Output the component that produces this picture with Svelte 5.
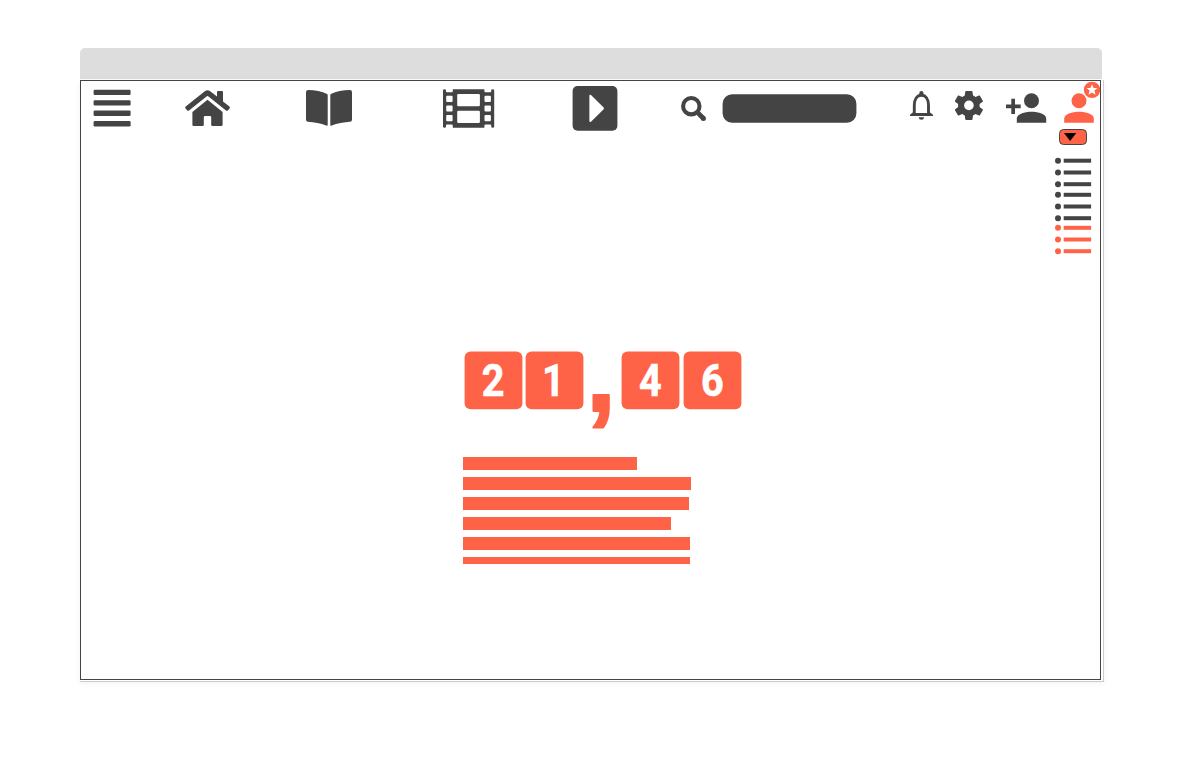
<script>
  const lists = [
    { tone: 'dark', rows: [160.7, 172.5, 184.2] },
    { tone: 'dark', rows: [194.8, 206.5, 218.2] },
    { tone: 'coral', rows: [227.8, 239.5, 251.2] }
  ];
  const digits = [
    { value: '2', left: 464.6, centre: 493.2 },
    { value: '1', left: 525.6, centre: 553.4 },
    { value: '4', left: 621.6, centre: 650.4 },
    { value: '6', left: 683.6, centre: 712.3 }
  ];
  const lines = [174, 228, 226, 208, 227, 227];
</script>

<main>
  <div class="titlebar"></div>
  <div class="window">
    <div class="screen">
      <nav>
        <svg class="menu" width="38" height="52" viewBox="93 81 38 52">
          {#each [89.7, 100.2, 110.6, 121.1] as y}
            <rect x="93.6" {y} width="37" height="5.3" rx="1.2" />
          {/each}
        </svg>
        <svg class="home" width="46" height="52" viewBox="185 81 46 52">
          <path d="M185.6 108.4Q184.7 107.3 185.7 106.4L204.8 91.2Q207.5 89.5 210.2 91.2L217 96.6V92Q217 91 218 91H222Q223 91 223 92V101.4L229.4 106.5Q230.3 107.3 229.5 108.4L227.8 110.4Q227 111.2 226 110.5L208.5 96.4Q207.5 95.7 206.5 96.4L189 110.5Q188 111.2 187.2 110.4Z" />
          <path d="M207.5 99.8L222.6 112V124.8Q222.6 126 221.4 126H212.4Q211.2 126 211.2 124.8V117.2Q211.2 116 210 116H205Q203.8 116 203.8 117.2V124.8Q203.8 126 202.6 126H193.6Q192.4 126 192.4 124.8V112Z" />
        </svg>
        <svg class="book" width="46" height="52" viewBox="306 81 46 52">
          <path d="M308.2 90.1C315 90.4 322 91.4 327.1 94.1Q327.7 94.5 327.7 95.2V124.8Q327.7 126.2 326.2 125.6C321 123.2 314 122.2 308 121.8Q306 121.6 306 119.7V92.2Q306 90 308.2 90.1Z" />
          <path d="M349.8 90.1C343 90.4 336 91.4 330.9 94.1Q330.3 94.5 330.3 95.2V124.8Q330.3 126.2 331.8 125.6C337 123.2 344 122.2 350 121.8Q352 121.6 352 119.7V92.2Q352 90 349.8 90.1Z" />
        </svg>
        <svg class="film" width="52" height="52" viewBox="443 81 52 52">
          <path d="M443 90.3Q443 89.2 444.6 89.2Q446 89.2 446 90.5V91.2Q446 92.3 447 92.3H451.7Q452.8 92.3 452.8 91.2V89.2H484.4V91.2Q484.4 92.3 485.5 92.3H490.2Q491.2 92.3 491.2 91.2V90.5Q491.2 89.2 492.6 89.2Q494.2 89.2 494.2 90.3V126.7Q494.2 127.8 492.6 127.8Q491.2 127.8 491.2 126.5V125.7Q491.2 124.6 490.2 124.6H485.5Q484.4 124.6 484.4 125.7V127.8H452.8V125.7Q452.8 124.6 451.7 124.6H447Q446 124.6 446 125.7V126.5Q446 127.8 444.6 127.8Q443 127.8 443 126.7Z" />
          <g fill="#fff">
            <rect x="457.2" y="94.1" width="22.7" height="12.1" rx="1.2" />
            <rect x="457.2" y="110.8" width="22.7" height="12.1" rx="1.2" />
            {#each [95.8, 105.5, 115.1] as y}
              <rect x="446.2" {y} width="6.4" height="6.1" rx="1" />
              <rect x="484.5" {y} width="6.4" height="6.1" rx="1" />
            {/each}
          </g>
        </svg>
        <svg class="play" width="46" height="52" viewBox="572 81 46 52">
          <rect x="572.6" y="86.1" width="44.8" height="44.7" rx="5" />
          <path d="M589.4 96Q589.4 94 591 95.1L603.4 107.3Q604.4 108.4 603.4 109.5L591 121.7Q589.4 122.8 589.4 120.8Z" fill="#fff" />
        </svg>
        <svg class="search" width="26" height="52" viewBox="681 81 26 52">
          <circle cx="691.3" cy="106.2" r="8.2" fill="none" stroke="#444" stroke-width="4.1" />
          <path d="M697.7 112.6L703.7 118.7" fill="none" stroke="#444" stroke-width="4.8" />
          <circle cx="703.4" cy="118.4" r="2.5" />
        </svg>
        <svg class="field" width="136" height="52" viewBox="722 81 136 52">
          <rect x="722.6" y="94.2" width="133.8" height="28.5" rx="9.5" />
        </svg>
        <svg class="bell" width="24" height="52" viewBox="909 81 24 52">
          <path d="M914.3 114V105.5C914.3 99.5 917 95.3 921.4 95.3S928.5 99.5 928.5 105.5V114" fill="none" stroke="#444" stroke-width="2.9" />
          <path d="M919.3 95V93Q919.3 91 921.4 91T923.5 93V95ZM910 116V114.7L913.3 111.9V113H929.5V111.9L933 114.7V116ZM918.6 117.2H924.2Q923.8 119.8 921.4 119.8T918.6 117.2Z" />
        </svg>
        <svg class="gear" width="28" height="52" viewBox="955 81 28 52">
          <path transform="translate(951.6 88.2) scale(1.44)" d="M19.43 12.98c.04-.32.07-.64.07-.98s-.03-.66-.07-.98l2.11-1.65c.19-.15.24-.42.12-.64l-2-3.46c-.12-.22-.39-.3-.61-.22l-2.49 1c-.52-.4-1.08-.73-1.69-.98l-.38-2.65C14.46 2.18 14.25 2 14 2h-4c-.25 0-.46.18-.49.42l-.38 2.65c-.61.25-1.17.59-1.69.98l-2.49-1c-.23-.09-.49 0-.61.22l-2 3.46c-.13.22-.07.49.12.64l2.11 1.65c-.04.32-.07.65-.07.98s.03.66.07.98l-2.11 1.65c-.19.15-.24.42-.12.64l2 3.46c.12.22.39.3.61.22l2.49-1c.52.4 1.08.73 1.69.98l.38 2.65c.03.24.24.42.49.42h4c.25 0 .46-.18.49-.42l.38-2.65c.61-.25 1.17-.59 1.69-.98l2.49 1c.23.09.49 0 .61-.22l2-3.46c.12-.22.07-.49-.12-.64l-2.11-1.65z" />
          <circle cx="968.9" cy="105.4" r="4.8" fill="#fff" />
        </svg>
        <svg class="add" width="41" height="52" viewBox="1006 81 41 52">
          <path d="M1011.3 98.8H1015V104.5H1020.7V108.2H1015V114H1011.3V108.2H1005.8V104.5H1011.3Z" />
          <circle cx="1031.5" cy="100.7" r="7.5" />
          <path d="M1016.8 122.8V118.5C1016.8 114 1024.5 111.7 1031.5 111.7S1046.2 114 1046.2 118.5V122.8Z" />
        </svg>
        <svg class="user" width="37" height="52" viewBox="1063 81 37 52">
          <g fill="#ff6347">
            <circle cx="1079" cy="100.7" r="7.5" />
            <path d="M1064.2 122.8V118.5C1064.2 114 1072 111.7 1079 111.7S1093.8 114 1093.8 118.5V122.8Z" />
            <circle cx="1092" cy="89.9" r="8.2" />
          </g>
          <path d="M1092 84.2L1093.6 88H1097.5L1094.4 90.6L1095.5 94.7L1092 92.4L1088.5 94.7L1089.6 90.6L1086.5 88H1090.4Z" fill="#fff" />
        </svg>
      </nav>

      <aside>
        <svg width="46" height="128" viewBox="1051 129 46 128">
          <rect x="1059.5" y="129.5" width="27" height="15" rx="4" fill="#ff6347" stroke="#444" />
          <path d="M1064 133H1076.3L1070.1 141Z" fill="#000" />
          {#each lists as list}
            <g class={list.tone}>
              {#each list.rows as y}
                <circle cx="1058" cy={y} r="3" />
                <rect x="1063.7" y={y - 2} width="27.4" height="4" />
              {/each}
            </g>
          {/each}
        </svg>
      </aside>

      <section>
        <svg class="score" width="280" height="106" viewBox="463 351 280 106">
          {#each digits as digit}
            <rect x={digit.left} y="351.6" width="57.8" height="57.6" rx="6" />
            <text class="digit" transform="translate({digit.centre} 396.4) scale(.88 1)" text-anchor="middle">{digit.value}</text>
          {/each}
          <text class="comma" transform="translate(601 411)" text-anchor="middle">,</text>
        </svg>
        <div class="lines">
          {#each lines as width}
            <div class="line" style="width: {width}px"></div>
          {/each}
        </div>
      </section>
    </div>
  </div>
</main>

<style>
  :global(body) { margin: 0; background: #fff; }
  main {
    box-sizing: border-box;
    width: 1182px;
    height: 760px;
    padding: 48px 0 0 80px;
    overflow: hidden;
    font-family: Roboto, sans-serif;
  }
  .titlebar { width: 1022px; height: 31px; margin-bottom: 1px; border-radius: 5px 5px 0 0; background: #ddd; }
  .window {
    box-sizing: border-box;
    width: 1024px;
    height: 602px;
    border: solid #ccc;
    border-width: 0 1px 1px 0;
    box-shadow: 0 1px 6px rgba(0, 0, 0, .06);
  }
  .screen { box-sizing: border-box; width: 1021px; height: 600px; border: 1px solid #444; background: #fff; }
  svg { display: block; flex: none; fill: #444; }
  nav { display: flex; height: 48px; padding-left: 12px; }
  .home { margin-left: 54px; }
  .book { margin-left: 75px; }
  .film { margin-left: 91px; }
  .play { margin-left: 77px; }
  .search { margin-left: 63px; }
  .field { margin-left: 15px; }
  .bell { margin-left: 51px; }
  .gear { margin-left: 22px; }
  .add { margin-left: 23px; }
  .user { margin-left: 16px; }
  aside { display: flex; justify-content: flex-end; height: 128px; padding-right: 3px; }
  .coral { fill: #ff6347; }
  .dark { fill: #444; }
  section { padding: 94px 0 0 382px; }
  .score { overflow: visible; fill: #ff6347; }
  .digit { fill: #fff; stroke: #fff; stroke-width: .6px; font-size: 45px; font-weight: 700; }
  .comma {
    fill: #ff6347;
    stroke: #ff6347;
    stroke-width: 2px;
    stroke-linejoin: round;
    font: 700 108px "Liberation Sans", sans-serif;
  }
  .lines { display: flex; flex-direction: column; gap: 7px; height: 107px; overflow: hidden; }
  .line { flex: none; height: 13px; background: #ff6347; }
</style>
